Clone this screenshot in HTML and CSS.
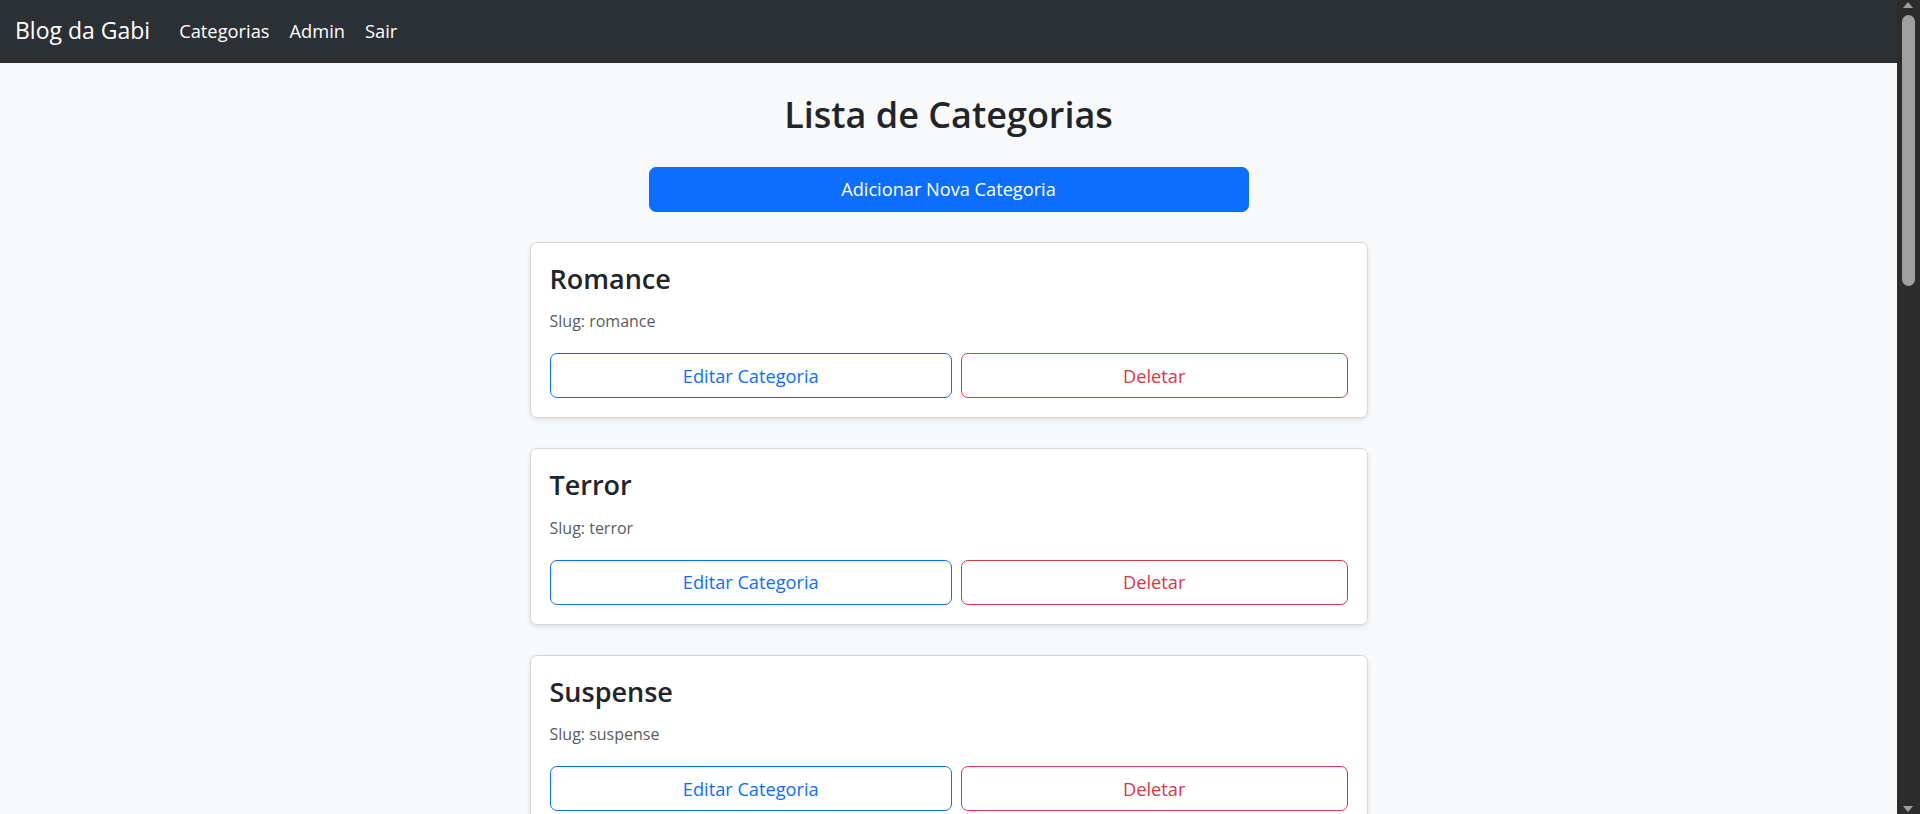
FILE: index.html
```html
<!DOCTYPE html>
<html lang="pt-BR">
<head>
<meta charset="utf-8">
<title>Blog da Gabi - Categorias</title>
<link rel="stylesheet" href="styles.css">
</head>
<body>
<div class="app">
  <div class="page">
    <nav class="navbar">
      <a class="brand" href="#">Blog da Gabi</a>
      <ul class="nav-links">
        <li><a href="#">Categorias</a></li>
        <li><a href="#">Admin</a></li>
        <li><a href="#">Sair</a></li>
      </ul>
    </nav>
    <main class="content">
      <h1 class="page-title">Lista de Categorias</h1>
      <a class="btn btn-primary btn-add" href="#">Adicionar Nova Categoria</a>
      <div class="card-list">
        <div class="card">
          <h3 class="card-title">Romance</h3>
          <p class="card-slug">Slug: romance</p>
          <div class="card-actions">
            <a class="btn btn-outline-primary" href="#">Editar Categoria</a>
            <button class="btn btn-outline-danger" type="button">Deletar</button>
          </div>
        </div>
        <div class="card">
          <h3 class="card-title">Terror</h3>
          <p class="card-slug">Slug: terror</p>
          <div class="card-actions">
            <a class="btn btn-outline-primary" href="#">Editar Categoria</a>
            <button class="btn btn-outline-danger" type="button">Deletar</button>
          </div>
        </div>
        <div class="card">
          <h3 class="card-title">Suspense</h3>
          <p class="card-slug">Slug: suspense</p>
          <div class="card-actions">
            <a class="btn btn-outline-primary" href="#">Editar Categoria</a>
            <button class="btn btn-outline-danger" type="button">Deletar</button>
          </div>
        </div>
      </div>
    </main>
  </div>
  <div class="scrollbar" aria-hidden="true">
    <span class="arrow arrow-up"></span>
    <span class="thumb"></span>
    <span class="arrow arrow-down"></span>
  </div>
</div>
</body>
</html>
```

FILE: styles.css
```css
* { box-sizing: border-box; }
html, body {
  margin: 0;
  padding: 0;
  height: 100%;
  overflow: hidden;
}
body {
  font-family: "Segoe UI", "Open Sans", "Noto Sans", sans-serif;
  color: #212529;
  background: #f8f9fa;
}
.app {
  display: flex;
  height: 814px;
}
.page {
  flex: 1;
  min-width: 0;
  overflow: hidden;
  background: #f8f9fa;
}

/* navbar */
.navbar {
  height: 63px;
  background: #2b3035;
  display: flex;
  align-items: center;
  padding: 0 15px 3px;
}
.brand {
  color: #fff;
  text-decoration: none;
  font-size: 23px;
  margin-right: 29px;
}
.nav-links {
  list-style: none;
  margin: 0;
  padding: 0;
  display: flex;
  gap: 20px;
}
.nav-links a {
  color: #fff;
  text-decoration: none;
  font-size: 18.3px;
}

/* content */
.content {
  width: 838px;
  margin: 0 auto;
  padding-top: 28.5px;
  display: flex;
  flex-direction: column;
  align-items: center;
}
.page-title {
  margin: 0 0 29px;
  font-size: 36px;
  line-height: 46px;
  font-weight: 600;
  color: #212529;
}
.btn {
  display: flex;
  align-items: center;
  justify-content: center;
  height: 45px;
  border: 1px solid transparent;
  border-radius: 7px;
  font-family: inherit;
  font-size: 18.2px;
  text-decoration: none;
  background: #fff;
  cursor: pointer;
  padding: 0 14px;
}
.btn-primary {
  background: #0d6efd;
  border-color: #0d6efd;
  color: #fff;
}
.btn-add {
  width: 600px;
  height: 45px;
  margin-bottom: 30px;
}
.btn-outline-primary {
  color: #0d6efd;
  border-color: #0d6efd;
}
.btn-outline-danger {
  color: #dc3545;
  border-color: #dc3545;
}

.card-list {
  width: 100%;
  display: flex;
  flex-direction: column;
  gap: 30px;
}
.card {
  background: #fff;
  border: 1px solid #d5d7d9;
  border-radius: 7px;
  box-shadow: 0 2px 5px rgba(0, 0, 0, 0.1);
  padding: 19px 19px 19px;
}
.card-title {
  margin: 0 0 13px;
  font-size: 27px;
  line-height: 34.5px;
  font-weight: 600;
  color: #212529;
}
.card-slug {
  margin: 0 0 19px;
  font-size: 16px;
  line-height: 25px;
  color: #595c5f;
}
.card-actions {
  display: grid;
  grid-template-columns: 403fr 387fr;
  gap: 9px;
}

/* scrollbar */
.scrollbar {
  width: 23px;
  flex: none;
  background: #2c2c2c;
  position: relative;
}
.thumb {
  position: absolute;
  left: 5px;
  width: 13px;
  top: 15px;
  height: 271px;
  border-radius: 7px;
  background: #9f9f9f;
}
.arrow {
  position: absolute;
  left: 6px;
  width: 0;
  height: 0;
  border-left: 5.5px solid transparent;
  border-right: 5.5px solid transparent;
}
.arrow-up {
  top: 2px;
  border-bottom: 6px solid #9f9f9f;
}
.arrow-down {
  bottom: 2px;
  border-top: 6px solid #9f9f9f;
}
```
